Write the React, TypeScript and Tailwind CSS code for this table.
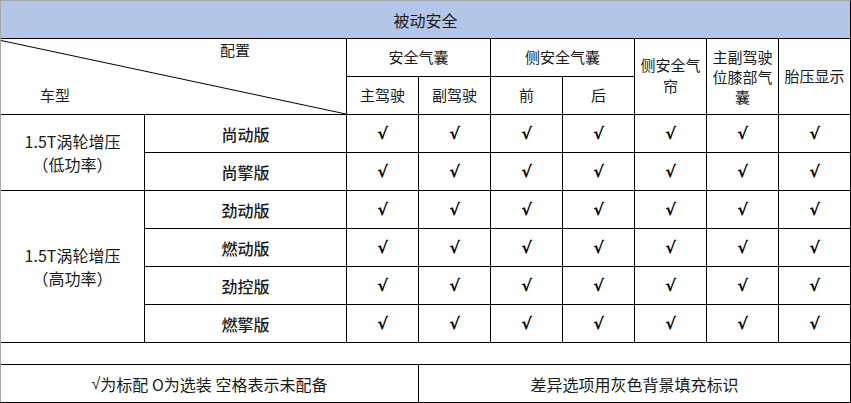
import React from "react";

const font = { fontFamily: '"Noto Sans CJK SC", "Noto Sans", sans-serif' };
const checkFont = { fontFamily: '"DejaVu Sans", sans-serif' };

const trims = [
  { name: "尚动版", row: "row-start-4" },
  { name: "尚擎版", row: "row-start-5" },
  { name: "劲动版", row: "row-start-6" },
  { name: "燃动版", row: "row-start-7" },
  { name: "劲控版", row: "row-start-8" },
  { name: "燃擎版", row: "row-start-9" },
];

const cell = "bg-white flex items-center justify-center text-center";

function Check() {
  return (
    <span className="text-[16px] font-bold text-black leading-none" style={checkFont}>
      √
    </span>
  );
}

export default function App() {
  return (
    <div className="w-[851px] h-[403px] bg-white text-[#1a1a1a]" style={font}>
      <div className="grid grid-cols-[143px_201px_repeat(7,71px)] grid-rows-[repeat(9,37px)_21px_37px] gap-px bg-black border-l border-t border-l-[#a6a6a6] border-t-[#a6a6a6] border-r border-b border-r-black border-b-black">
        <div className="col-span-9 bg-[#b4c6e7] flex items-center justify-center text-[16px]">被动安全</div>

        {/* corner */}
        <div className="col-span-2 row-span-2 bg-white relative text-[15px] leading-[22px]">
          <svg className="absolute inset-0 w-full h-full" preserveAspectRatio="none" viewBox="0 0 100 100">
            <line x1="0" y1="2" x2="100" y2="100" stroke="#000" strokeWidth="1" vectorEffect="non-scaling-stroke" />
          </svg>
          <div className="ml-[219px]">配置</div>
          <div className="ml-[39px] mt-[23px]">车型</div>
        </div>

        <div className={`${cell} col-span-2 text-[15px]`}>安全气囊</div>
        <div className={`${cell} col-span-2 text-[15px]`}>侧安全气囊</div>
        <div className={`${cell} row-span-2 text-[15px] leading-[21px] pb-[4px]`}>
          <span className="w-[62px]">侧安全气帘</span>
        </div>
        <div className={`${cell} row-span-2 text-[15px] leading-[20px]`}>
          <span className="w-[62px]">主副驾驶位膝部气囊</span>
        </div>
        <div className={`${cell} row-span-2 text-[15px]`}>胎压显示</div>
        <div className={`${cell} text-[15px]`}>主驾驶</div>
        <div className={`${cell} text-[15px]`}>副驾驶</div>
        <div className={`${cell} text-[15px]`}>前</div>
        <div className={`${cell} text-[15px]`}>后</div>

        <div className={`${cell} row-start-4 row-span-2 col-start-1 text-[16px] leading-[23px]`}>
          1.5T涡轮增压<br />（低功率）
        </div>
        <div className={`${cell} row-start-6 row-span-4 col-start-1 text-[16px] leading-[23px]`}>
          1.5T涡轮增压<br />（高功率）
        </div>

        {trims.map((t) => (
          <React.Fragment key={t.name}>
            <div className={`${cell} ${t.row} col-start-2 text-[16px] font-medium`}>{t.name}</div>
            {Array.from({ length: 7 }).map((_, i) => (
              <div key={i} className={`${cell} ${t.row}`}>
                <Check />
              </div>
            ))}
          </React.Fragment>
        ))}

        <div className="col-span-9 bg-white" />
        <div className={`${cell} col-span-3 text-[16px]`}>
          <span style={{ fontFamily: '"Liberation Sans", sans-serif' }}>√</span>为标配 O为选装 空格表示未配备
        </div>
        <div className={`${cell} col-span-6 text-[16px]`}>差异选项用灰色背景填充标识</div>
      </div>
    </div>
  );
}
